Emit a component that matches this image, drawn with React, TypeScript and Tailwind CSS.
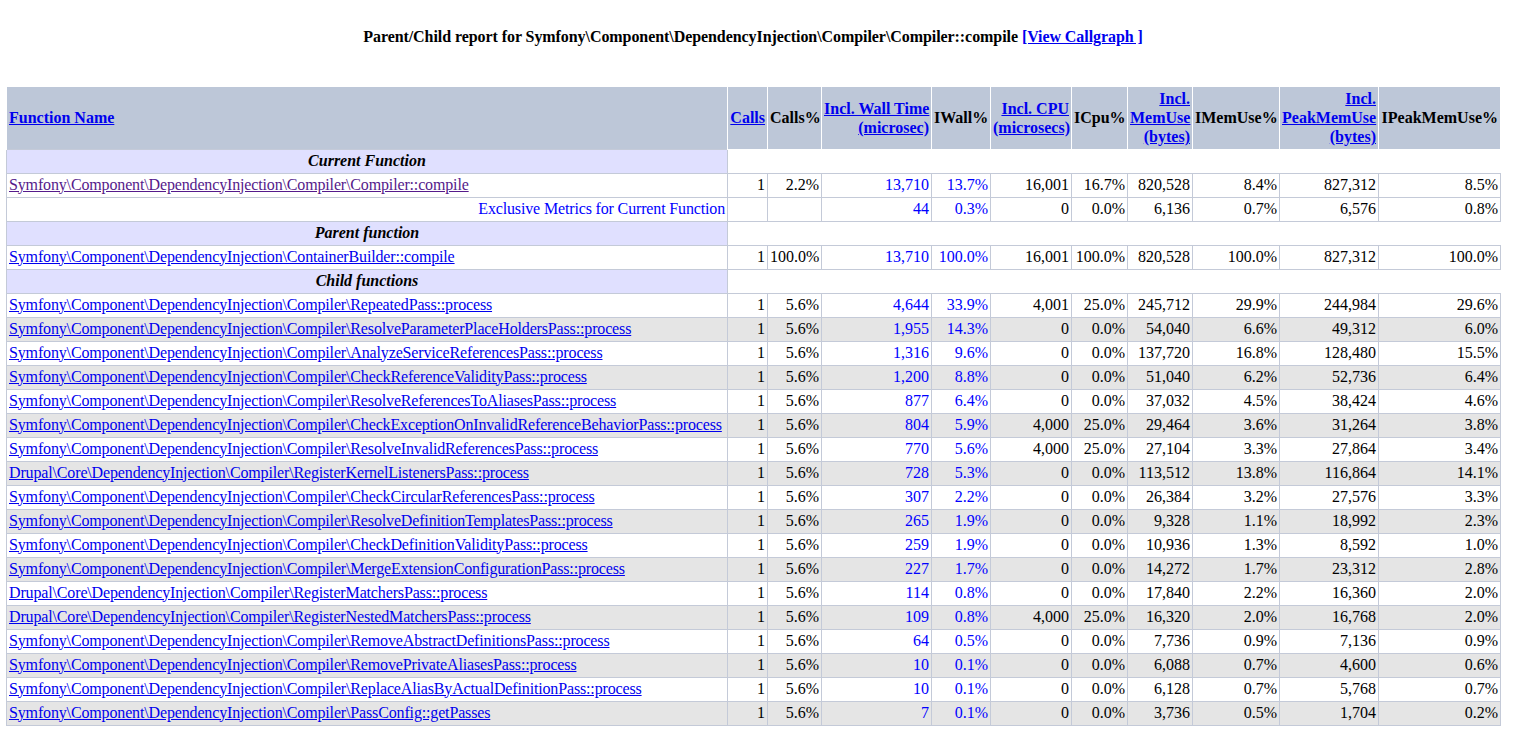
import React from 'react';

type Row = {
  fn: string;
  calls: string;
  callsPct: string;
  wall: string;
  wallPct: string;
  cpu: string;
  cpuPct: string;
  mem: string;
  memPct: string;
  peak: string;
  peakPct: string;
};

const SF = 'Symfony\\Component\\DependencyInjection\\Compiler\\';
const DR = 'Drupal\\Core\\DependencyInjection\\Compiler\\';

// calls, calls%, wall, wall%, cpu, cpu%, mem, mem%, peak, peak%
const mk = (fn: string, v: string[]): Row => ({
  fn,
  calls: v[0],
  callsPct: v[1],
  wall: v[2],
  wallPct: v[3],
  cpu: v[4],
  cpuPct: v[5],
  mem: v[6],
  memPct: v[7],
  peak: v[8],
  peakPct: v[9],
});

const current = mk(SF + 'Compiler::compile', ['1', '2.2%', '13,710', '13.7%', '16,001', '16.7%', '820,528', '8.4%', '827,312', '8.5%']);
const exclusive = mk('Exclusive Metrics for Current Function', ['', '', '44', '0.3%', '0', '0.0%', '6,136', '0.7%', '6,576', '0.8%']);
const parent = mk('Symfony\\Component\\DependencyInjection\\ContainerBuilder::compile', ['1', '100.0%', '13,710', '100.0%', '16,001', '100.0%', '820,528', '100.0%', '827,312', '100.0%']);

const children: Row[] = [
  mk(SF + 'RepeatedPass::process', ['1', '5.6%', '4,644', '33.9%', '4,001', '25.0%', '245,712', '29.9%', '244,984', '29.6%']),
  mk(SF + 'ResolveParameterPlaceHoldersPass::process', ['1', '5.6%', '1,955', '14.3%', '0', '0.0%', '54,040', '6.6%', '49,312', '6.0%']),
  mk(SF + 'AnalyzeServiceReferencesPass::process', ['1', '5.6%', '1,316', '9.6%', '0', '0.0%', '137,720', '16.8%', '128,480', '15.5%']),
  mk(SF + 'CheckReferenceValidityPass::process', ['1', '5.6%', '1,200', '8.8%', '0', '0.0%', '51,040', '6.2%', '52,736', '6.4%']),
  mk(SF + 'ResolveReferencesToAliasesPass::process', ['1', '5.6%', '877', '6.4%', '0', '0.0%', '37,032', '4.5%', '38,424', '4.6%']),
  mk(SF + 'CheckExceptionOnInvalidReferenceBehaviorPass::process', ['1', '5.6%', '804', '5.9%', '4,000', '25.0%', '29,464', '3.6%', '31,264', '3.8%']),
  mk(SF + 'ResolveInvalidReferencesPass::process', ['1', '5.6%', '770', '5.6%', '4,000', '25.0%', '27,104', '3.3%', '27,864', '3.4%']),
  mk(DR + 'RegisterKernelListenersPass::process', ['1', '5.6%', '728', '5.3%', '0', '0.0%', '113,512', '13.8%', '116,864', '14.1%']),
  mk(SF + 'CheckCircularReferencesPass::process', ['1', '5.6%', '307', '2.2%', '0', '0.0%', '26,384', '3.2%', '27,576', '3.3%']),
  mk(SF + 'ResolveDefinitionTemplatesPass::process', ['1', '5.6%', '265', '1.9%', '0', '0.0%', '9,328', '1.1%', '18,992', '2.3%']),
  mk(SF + 'CheckDefinitionValidityPass::process', ['1', '5.6%', '259', '1.9%', '0', '0.0%', '10,936', '1.3%', '8,592', '1.0%']),
  mk(SF + 'MergeExtensionConfigurationPass::process', ['1', '5.6%', '227', '1.7%', '0', '0.0%', '14,272', '1.7%', '23,312', '2.8%']),
  mk(DR + 'RegisterMatchersPass::process', ['1', '5.6%', '114', '0.8%', '0', '0.0%', '17,840', '2.2%', '16,360', '2.0%']),
  mk(DR + 'RegisterNestedMatchersPass::process', ['1', '5.6%', '109', '0.8%', '4,000', '25.0%', '16,320', '2.0%', '16,768', '2.0%']),
  mk(SF + 'RemoveAbstractDefinitionsPass::process', ['1', '5.6%', '64', '0.5%', '0', '0.0%', '7,736', '0.9%', '7,136', '0.9%']),
  mk(SF + 'RemovePrivateAliasesPass::process', ['1', '5.6%', '10', '0.1%', '0', '0.0%', '6,088', '0.7%', '4,600', '0.6%']),
  mk(SF + 'ReplaceAliasByActualDefinitionPass::process', ['1', '5.6%', '10', '0.1%', '0', '0.0%', '6,128', '0.7%', '5,768', '0.7%']),
  mk(SF + 'PassConfig::getPasses', ['1', '5.6%', '7', '0.1%', '0', '0.0%', '3,736', '0.5%', '1,704', '0.2%']),
];

const link = 'text-[#0000ee] underline';
// base cell styles, alignment added per cell
const cell = 'border border-[#c4cad8] px-[2px] pt-[1px] pb-[3px] leading-[19px] whitespace-nowrap';
const num = `${cell} text-right`;
const head = 'border-x border-white px-[2px] pt-[2px] pb-[3px] leading-[19px] align-middle font-bold whitespace-nowrap';
const th = `${head} text-right`;

function DataRow({ r, gray, visited, exclusiveRow }: { r: Row; gray?: boolean; visited?: boolean; exclusiveRow?: boolean }) {
  return (
    <tr className={gray ? 'bg-[#e5e5e5]' : 'bg-white'}>
      {exclusiveRow ? (
        <td className={`${cell} text-right text-[#0000ff] tracking-[-0.15px]`}>{r.fn}</td>
      ) : (
        <td className={`${cell} text-left tracking-[-0.15px]`}>
          <a href="#" className={visited ? 'text-[#551a8b] underline' : link}>
            {r.fn}
          </a>
        </td>
      )}
      <td className={num}>{r.calls}</td>
      <td className={num}>{r.callsPct}</td>
      <td className={`${num} text-[#0000ff]`}>{r.wall}</td>
      <td className={`${num} text-[#0000ff]`}>{r.wallPct}</td>
      <td className={num}>{r.cpu}</td>
      <td className={num}>{r.cpuPct}</td>
      <td className={num}>{r.mem}</td>
      <td className={num}>{r.memPct}</td>
      <td className={num}>{r.peak}</td>
      <td className={num}>{r.peakPct}</td>
    </tr>
  );
}

function Section({ title }: { title: string }) {
  return (
    <tr>
      <td className={`${cell} bg-[#e0e0ff] text-center font-bold italic`}>{title}</td>
    </tr>
  );
}

export default function App() {
  return (
    <div className="w-[1506px] bg-white text-black text-[16px] font-['Liberation_Serif',serif]">
      <div className="pt-[28px] text-center font-bold leading-[18px] tracking-[-0.07px]">
        Parent/Child report for Symfony\Component\DependencyInjection\Compiler\Compiler::compile{' '}
        <a href="#" className={link}>
          [View Callgraph ]
        </a>
      </div>

      <table className="mt-[41px] ml-[6px] w-[1494px] table-fixed border-collapse">
        <colgroup>
          <col className="w-[721px]" />
          <col className="w-[40px]" />
          <col className="w-[54px]" />
          <col className="w-[110px]" />
          <col className="w-[59px]" />
          <col className="w-[81px]" />
          <col className="w-[56px]" />
          <col className="w-[65px]" />
          <col className="w-[87px]" />
          <col className="w-[99px]" />
          <col className="w-[122px]" />
        </colgroup>
        <thead>
          <tr className="bg-[#bdc7d8]">
            <th className={`${head} text-left`}>
              <a href="#" className={link}>Function Name</a>
            </th>
            <th className={th}>
              <a href="#" className={link}>Calls</a>
            </th>
            <th className={th}>Calls%</th>
            <th className={th}>
              <a href="#" className={link}>Incl. Wall Time<br />(microsec)</a>
            </th>
            <th className={th}>IWall%</th>
            <th className={th}>
              <a href="#" className={link}>Incl. CPU<br />(microsecs)</a>
            </th>
            <th className={th}>ICpu%</th>
            <th className={th}>
              <a href="#" className={link}>Incl.<br />MemUse<br />(bytes)</a>
            </th>
            <th className={th}>IMemUse%</th>
            <th className={th}>
              <a href="#" className={link}>Incl.<br />PeakMemUse<br />(bytes)</a>
            </th>
            <th className={th}>IPeakMemUse%</th>
          </tr>
        </thead>
        <tbody>
          <Section title="Current Function" />
          <DataRow r={current} visited />
          <DataRow r={exclusive} exclusiveRow />
          <Section title="Parent function" />
          <DataRow r={parent} />
          <Section title="Child functions" />
          {children.map((c, i) => (
            <DataRow key={c.fn} r={c} gray={i % 2 === 1} />
          ))}
        </tbody>
      </table>
    </div>
  );
}
